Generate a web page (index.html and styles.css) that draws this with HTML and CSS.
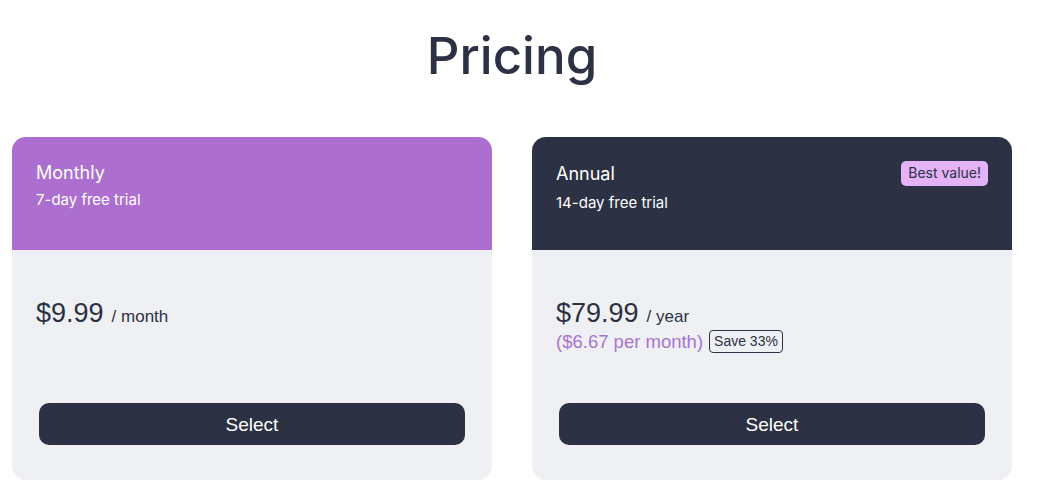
FILE: index.html
```html
<!DOCTYPE html>
<html>
<head>
<meta charset="utf-8">
<link rel="stylesheet" href="styles.css">
</head>
<body>
<main class="page">
  <h1 class="title">Pricing</h1>
  <div class="plans">
    <section class="card">
      <header class="card-head head-monthly">
        <div class="head-text">
          <div class="plan-name">Monthly</div>
          <div class="plan-trial">7-day free trial</div>
        </div>
      </header>
      <div class="card-body">
        <div class="price-block">
          <div class="price-line"><span class="price">$9.99</span><span class="period">/ month</span></div>
        </div>
        <button class="select-btn">Select</button>
      </div>
    </section>
    <section class="card">
      <header class="card-head head-annual">
        <div class="head-text">
          <div class="plan-name">Annual</div>
          <div class="plan-trial">14-day free trial</div>
        </div>
        <span class="best">Best value!</span>
      </header>
      <div class="card-body">
        <div class="price-block">
          <div class="price-line"><span class="price">$79.99</span><span class="period">/ year</span></div>
          <div class="sub-line"><span class="per-month">($6.67 per month)</span><span class="save">Save 33%</span></div>
        </div>
        <button class="select-btn">Select</button>
      </div>
    </section>
  </div>
</main>
</body>
</html>
```
FILE: styles.css
```css
* { box-sizing: border-box; }
html, body { margin: 0; padding: 0; background: #ffffff; }
body { font-family: "Liberation Sans", Arial, sans-serif; color: #2c3144; }
.page { padding: 0 12px; }
.title {
  margin: 0;
  padding-top: 24px;
  padding-right: 15px;
  height: 137px;
  text-align: center;
  font-family: "Inter", "Noto Sans", sans-serif;
  font-weight: 500;
  font-size: 51px;
  line-height: 64px;
  color: #2c3144;
}
.plans { display: flex; gap: 40px; }
.card {
  width: 480px;
  border-radius: 14px;
  overflow: hidden;
  background: #eff0f4;
  height: 343px;
  display: flex;
  flex-direction: column;
}
.card-head {
  height: 113px;
  padding: 24px 24px 0 24px;
  display: flex;
  justify-content: space-between;
  align-items: flex-start;
  font-family: "Inter", "Noto Sans", sans-serif;
  color: #ffffff;
}
.head-monthly { background: #ac6ecf; }
.head-annual { background: #2c3144; }
.head-annual .head-text { padding-top: 1px; }
.plan-name { font-size: 18px; line-height: 24px; }
.plan-trial { font-size: 15px; line-height: 20px; margin-top: 5px; }
.head-annual .plan-trial { margin-top: 7px; }
.best {
  background: #e3b2f8;
  color: #2c3144;
  font-size: 14px;
  line-height: 18px;
  padding: 3px 7px 4px;
  border-radius: 5px;
}
.card-body {
  flex: 1;
  display: flex;
  flex-direction: column;
  padding: 46px 27px 35px 27px;
}
.price-block { flex: 1; margin-left: -3px; }
.price-line { display: flex; align-items: baseline; gap: 8px; }
.price { font-size: 27px; line-height: 34px; color: #2c3144; }
.period { font-size: 17px; color: #2c3144; }
.sub-line { display: flex; align-items: center; gap: 6px; margin-top: 0; }
.per-month { font-size: 18.5px; color: #a974d0; }
.save {
  font-size: 14px;
  color: #2c3144;
  border: 1px solid #2c3144;
  border-radius: 4px;
  padding: 2px 4px;
  line-height: 17px;
}
.select-btn {
  height: 42px;
  width: 100%;
  border: none;
  border-radius: 10px;
  background: #2c3144;
  color: #ffffff;
  font-family: "Liberation Sans", Arial, sans-serif;
  font-size: 19px;
  padding-top: 3px;
}
```
